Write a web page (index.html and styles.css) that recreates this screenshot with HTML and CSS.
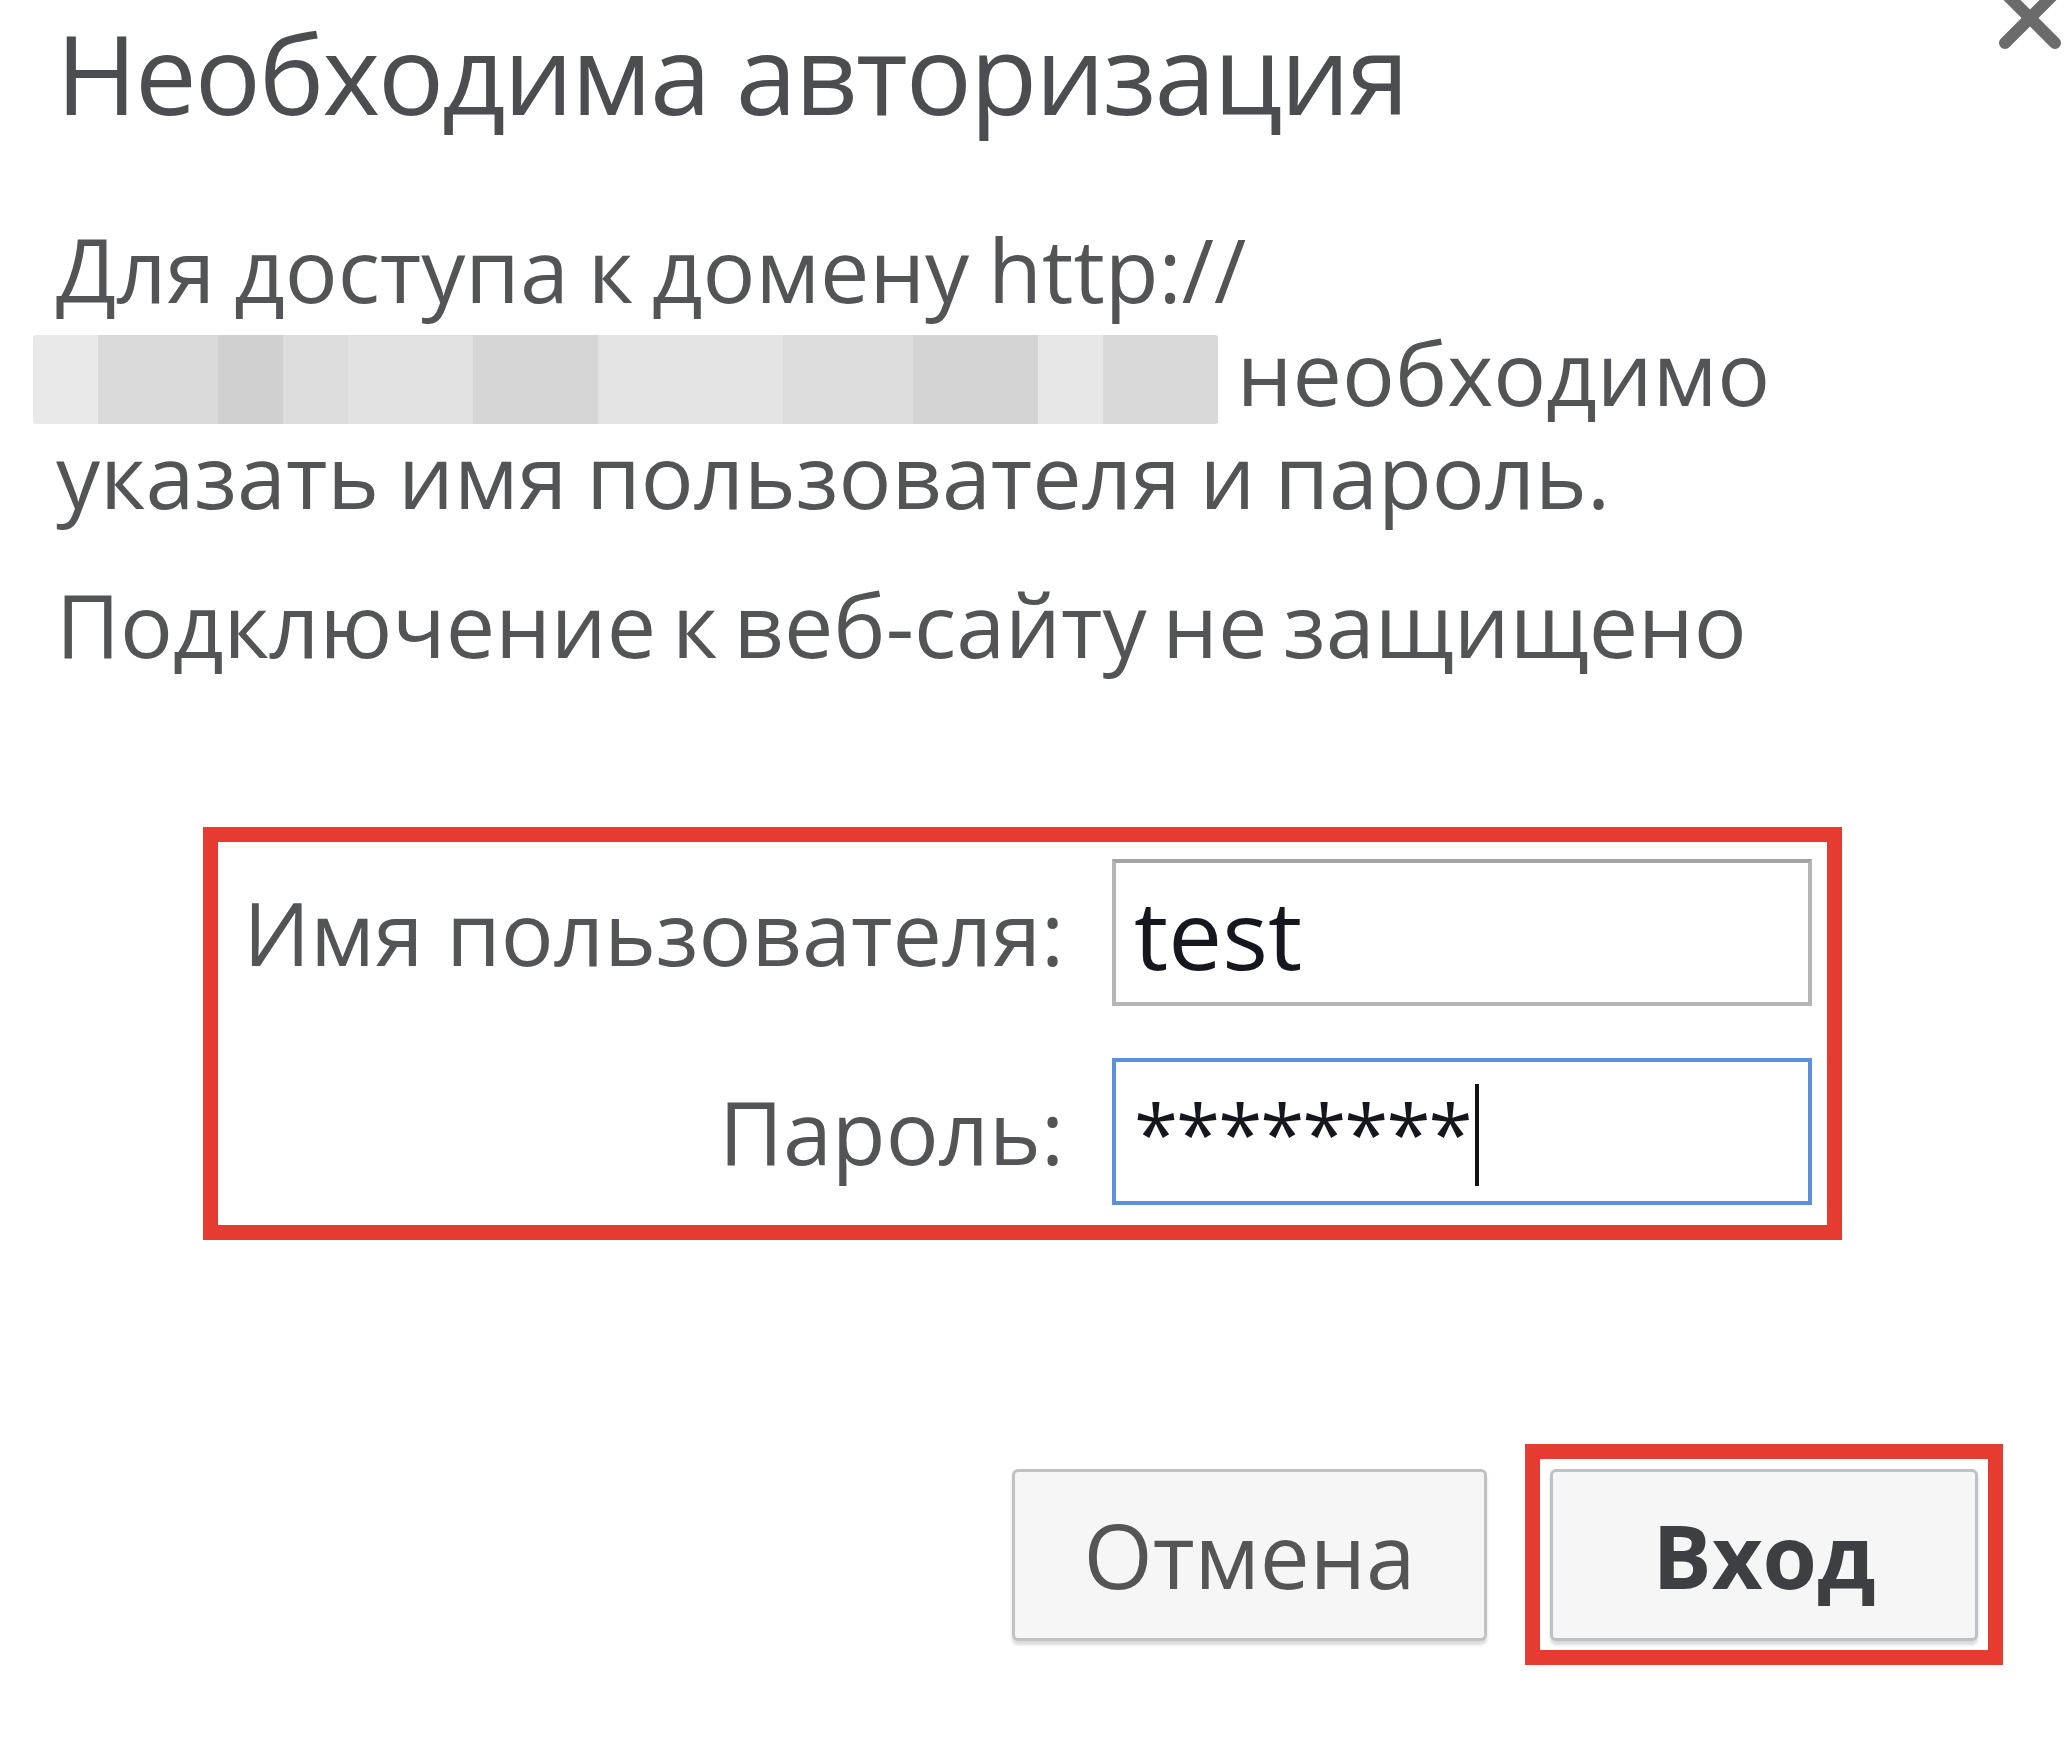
FILE: index.html
```html
<!DOCTYPE html>
<html lang="ru">
<head>
  <meta charset="UTF-8" />
  <title>Необходима авторизация</title>
  <link rel="stylesheet" href="styles.css">
</head>
<body>

  <div class="dialog">
    <!-- close button, cut off by the top edge -->
    <svg class="close" width="70" height="70" viewBox="0 0 70 70">
      <path d="M10 10 L60 60 M60 10 L10 60" stroke="#6b6b6b" stroke-width="12" stroke-linecap="round" />
    </svg>

    <h1 class="title">Необходима авторизация</h1>

    <p class="message">Для доступа к домену http://<br><span class="hidden-url"></span> необходимо указать имя пользователя и пароль.</p>
    <p class="message warning">Подключение к веб-сайту не защищено</p>

    <div class="login-box">
      <label class="field-label">Имя пользователя:</label>
      <div class="field">test</div>

      <label class="field-label">Пароль:</label>
      <div class="field field-focused"><span class="stars">********</span><span class="caret"></span></div>
    </div>

    <div class="actions">
      <button class="btn">Отмена</button>
      <div class="highlight">
        <button class="btn btn-default">Вход</button>
      </div>
    </div>
  </div>

</body>
</html>
```

FILE: styles.css
```css
body {
  margin: 0;
  background-color: #ffffff;
  font-family: "Open Sans", "Noto Sans", sans-serif;
  color: #555555;
}

.dialog {
  position: relative;
  padding: 6px 61px 0 56px;
}

.close {
  position: absolute;
  top: -17px;
  right: -1px;
}

.title {
  margin: 0;
  font-size: 110px;
  font-weight: normal;
  line-height: 132px;
  letter-spacing: -2px;
  color: #4b4d50;
}

.message {
  margin: 80px 0 0 0;
  font-size: 88px;
  line-height: 103px;
  word-spacing: -4px;
  color: #535456;
}

.message.warning {
  margin-top: 46px;
  word-spacing: -7px;
}

.hidden-url {
  display: inline-block;
  width: 1185px;
  height: 89px;
  margin-left: -23px;
  vertical-align: -18px;
  border-radius: 3px;
  background: linear-gradient(to right,
    #e9e9e9 0, #e9e9e9 65px,
    #dadada 65px, #dadada 185px,
    #d0d0d0 185px, #d0d0d0 250px,
    #dddddd 250px, #dddddd 315px,
    #e2e2e2 315px, #e2e2e2 440px,
    #d6d6d6 440px, #d6d6d6 565px,
    #e4e4e4 565px, #e4e4e4 750px,
    #dcdcdc 750px, #dcdcdc 880px,
    #d4d4d4 880px, #d4d4d4 1005px,
    #e6e6e6 1005px, #e6e6e6 1070px,
    #d9d9d9 1070px);
}

.login-box {
  display: grid;
  grid-template-columns: 1fr 700px;
  column-gap: 48px;
  row-gap: 52px;
  align-items: center;
  margin: 151px 0 0 147px;
  padding: 17px 15px 20px 0;
  box-sizing: border-box;
  width: 1639px;
  border: 15px solid #e63b30;
}

.field-label {
  text-align: right;
  font-size: 88px;
  line-height: 103px;
  color: #535456;
}

.field {
  height: 147px;
  box-sizing: border-box;
  padding: 0 18px;
  border: 4px solid #b5b5b5;
  border-top-color: #a3a3a3;
  display: flex;
  align-items: center;
  font-size: 96px;
  color: #16161e;
}

.field-focused {
  border-color: #5b90dc;
}

.stars {
  font-size: 80px;
  letter-spacing: -2px;
  margin-top: 0;
}

.caret {
  display: inline-block;
  width: 4px;
  height: 102px;
  margin-left: 4px;
  margin-top: 6px;
  background-color: #111111;
}

.actions {
  display: flex;
  justify-content: flex-end;
  align-items: center;
  gap: 38px;
  margin-top: 204px;
}

.highlight {
  border: 15px solid #e63b30;
  padding: 10px 10px 9px 10px;
}

.btn {
  width: 475px;
  height: 172px;
  background-color: #f6f6f6;
  border: 3px solid #c2c2c2;
  border-radius: 6px;
  box-shadow: 0 4px 3px rgba(0, 0, 0, 0.14);
  font-family: "Open Sans", "Noto Sans", sans-serif;
  font-size: 89px;
  color: #555555;
}

.btn-default {
  width: 428px;
  font-size: 88px;
  font-weight: bold;
  color: #3d3f42;
  border-color: #bcc2c6;
}
```
